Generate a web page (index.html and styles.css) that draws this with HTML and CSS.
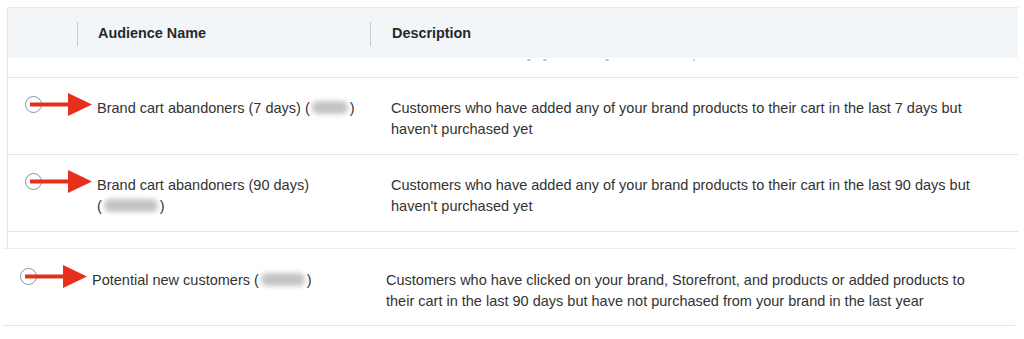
FILE: index.html
```html
<!DOCTYPE html>
<html>
<head>
<meta charset="utf-8">
<link rel="stylesheet" href="styles.css">
</head>
<body>
<div class="shot shot-top">
  <div class="thead">
    <div class="th th-sel"></div>
    <div class="th th-name"><span class="divider"></span><span class="th-label">Audience Name</span></div>
    <div class="th th-desc"><span class="divider"></span><span class="th-label">Description</span></div>
  </div>
  <div class="cut"><span class="mark m1"></span><span class="mark m2"></span><span class="mark m3"></span><span class="mark m4"></span></div>
  <div class="row">
    <div class="sel"><span class="radio"></span><svg class="arrow" width="62" height="26" viewBox="0 0 62 26"><rect x="0" y="10.5" width="40" height="4" fill="#e5301c"/><polygon points="38,1 62,12.5 38,24" fill="#e5301c"/></svg></div>
    <div class="name">Brand cart abandoners (7 days) <span class="nw">(<span class="blur w1"></span>)</span></div>
    <div class="desc">Customers who have added any of your brand products to their cart in the last 7 days but haven't purchased yet</div>
  </div>
  <div class="row">
    <div class="sel"><span class="radio"></span><svg class="arrow" width="62" height="26" viewBox="0 0 62 26"><rect x="0" y="10.5" width="40" height="4" fill="#e5301c"/><polygon points="38,1 62,12.5 38,24" fill="#e5301c"/></svg></div>
    <div class="name">Brand cart abandoners (90 days) <span class="nw">(<span class="blur w2"></span>)</span></div>
    <div class="desc">Customers who have added any of your brand products to their cart in the last 90 days but haven't purchased yet</div>
  </div>
  <div class="spacer"></div>
</div>
<div class="shot shot-bottom">
  <div class="row row3">
    <div class="sel"><span class="radio"></span><svg class="arrow" width="62" height="26" viewBox="0 0 62 26"><rect x="0" y="10.5" width="40" height="4" fill="#e5301c"/><polygon points="38,1 62,12.5 38,24" fill="#e5301c"/></svg></div>
    <div class="name">Potential new customers <span class="nw">(<span class="blur w3"></span>)</span></div>
    <div class="desc">Customers who have clicked on your brand, Storefront, and products or added products to their cart in the last 90 days but have not purchased from your brand in the last year</div>
  </div>
</div>
</body>
</html>
```
FILE: styles.css
```css
* { box-sizing: border-box; }
html, body { margin: 0; padding: 0; background: #fff; }
body {
  font-family: "Liberation Sans", Arial, Helvetica, sans-serif;
  color: #333;
  width: 1024px;
  height: 339px;
  overflow: hidden;
}
.shot-top {
  margin: 7px 0 0 7px;
  width: 1011px;
  border-left: 1px solid #e4e6e6;
  border-top: 1px solid #e6e9e9;
}
.thead {
  display: flex;
  height: 50px;
  background: #f3f6f8;
  align-items: center;
}
.th { display: flex; align-items: center; height: 100%; }
.th-sel { width: 69px; }
.th-name { width: 293px; }
.th-desc { flex: 1; }
.divider {
  width: 1px;
  height: 24px;
  background: #c9cccc;
  margin-top: 2px;
}
.th-label {
  font-weight: bold;
  font-size: 14.4px;
  color: #1e2b2b;
  padding-left: 20px;
}
.th-desc .th-label { padding-left: 21px; }
.cut {
  height: 20px;
  border-bottom: 1px solid #e4e6e6;
  display: flex;
  align-items: flex-start;
  padding-top: 1px;
}
.mark {
  display: block;
  height: 2px;
  width: 4px;
  background: #c4c8c8;
  border-radius: 1px;
}
.m1 { margin-left: 519px; }
.m2 { margin-left: 12px; }
.m3 { margin-left: 58px; }
.m4 { margin-left: 84px; width: 2px; }
.row {
  display: flex;
  align-items: flex-start;
  padding: 20px 0 14px;
  border-bottom: 1px solid #e4e6e6;
  font-size: 14.5px;
  line-height: 21px;
}
.sel {
  position: relative;
  width: 89px;
  flex: none;
  height: 21px;
  padding-left: 17px;
}
.radio {
  display: block;
  width: 17px;
  height: 17px;
  border: 1.5px solid #6f9bab;
  border-radius: 50%;
  background: #fff;
  margin-top: -2px;
}
.arrow {
  position: absolute;
  left: 22px;
  top: -6px;
}
.name {
  width: 294px;
  flex: none;
  padding-right: 24px;
}
.nw { white-space: nowrap; }
.desc {
  width: 600px;
  flex: none;
}
.blur {
  display: inline-block;
  height: 13px;
  vertical-align: -1px;
  background: #c4c4c4;
  border-radius: 6px;
  filter: blur(2.5px);
  margin: 0 2px;
}
.w1 { width: 36px; }
.w2 { width: 54px; }
.w3 { width: 44px; }
.spacer { height: 16px; }
.shot-bottom {
  margin-left: 3px;
  width: 1012px;
  border-top: 1px solid #eceeee;
}
.row3 { padding-top: 21px; padding-bottom: 14px; line-height: 20.5px; }
```
